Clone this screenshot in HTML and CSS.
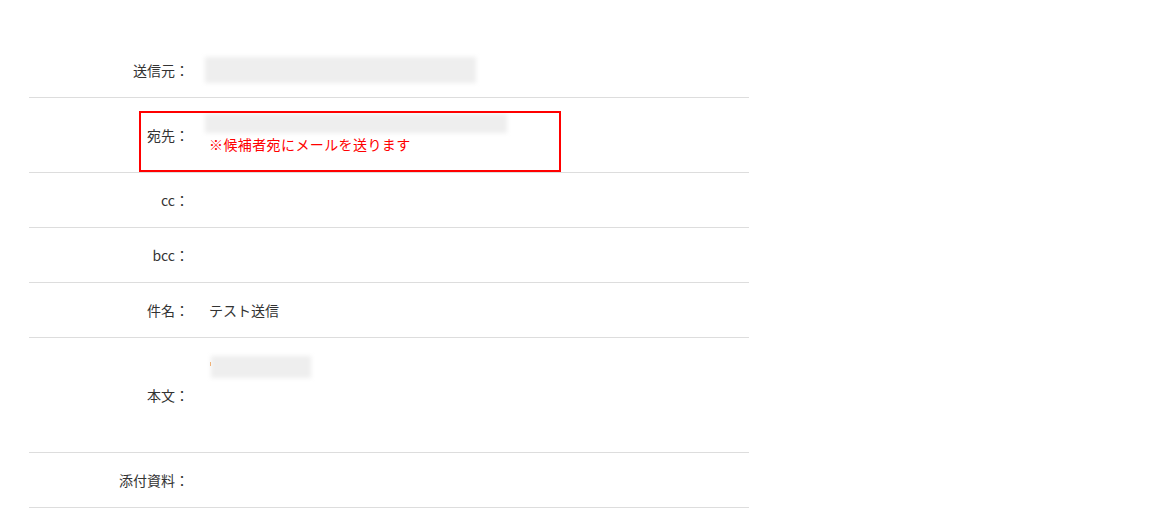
FILE: index.html
```html
<!DOCTYPE html>
<html lang="ja">
<head>
<meta charset="utf-8">
<title>メール送信</title>
<link rel="stylesheet" href="styles.css">
</head>
<body>
<div class="mail">
  <div class="row">
    <div class="label">送信元：</div>
    <div class="value"><div class="blur blur-from"></div></div>
  </div>
  <div class="row row-to">
    <div class="label">宛先：</div>
    <div class="value">
      <div class="blur blur-to"></div>
      <div class="note">※候補者宛にメールを送ります</div>
    </div>
    <div class="highlight"></div>
  </div>
  <div class="row">
    <div class="label">cc：</div>
    <div class="value"></div>
  </div>
  <div class="row">
    <div class="label">bcc：</div>
    <div class="value"></div>
  </div>
  <div class="row">
    <div class="label">件名：</div>
    <div class="value">テスト送信</div>
  </div>
  <div class="row row-body">
    <div class="label">本文：</div>
    <div class="value value-top"><span class="dot"></span><div class="blur blur-body"></div></div>
  </div>
  <div class="row">
    <div class="label">添付資料：</div>
    <div class="value"></div>
  </div>
</div>
</body>
</html>
```
FILE: styles.css
```css
html, body {
  margin: 0;
  padding: 0;
  background: #fff;
}
body {
  font-family: "Noto Sans CJK JP", "Noto Sans", sans-serif;
  font-size: 14px;
  color: #333;
}
.mail {
  width: 720px;
  margin-left: 29px;
  padding-top: 43px;
}
.row {
  position: relative;
  display: flex;
  align-items: center;
  min-height: 54px;
  border-bottom: 1px solid #dddddd;
}
.row-to {
  min-height: 74px;
}
.row-body {
  min-height: 114px;
  align-items: stretch;
}
.label {
  width: 160px;
  flex: none;
  text-align: right;
  line-height: 20px;
  align-self: center;
}
.value {
  padding-left: 20px;
  line-height: 20px;
  flex: 1;
}
.value-top {
  padding-top: 18px;
  position: relative;
}
.blur {
  background: #eeeeee;
  filter: blur(2px);
  margin-left: -4px;
}
.blur-from {
  width: 271px;
  height: 26px;
}
.blur-to {
  width: 302px;
  height: 19px;
  margin-top: -2px;
}
.blur-body {
  width: 100px;
  height: 22px;
  margin-left: 2px;
}
.note {
  color: #ff0000;
  letter-spacing: 0.4px;
  margin-top: 1px;
}
.dot {
  position: absolute;
  left: 21px;
  top: 24px;
  width: 1px;
  height: 4px;
  background: #f08a2a;
}
.highlight {
  position: absolute;
  left: 110px;
  top: 13px;
  width: 418px;
  height: 57px;
  border: 2px solid #ff0000;
}
```
